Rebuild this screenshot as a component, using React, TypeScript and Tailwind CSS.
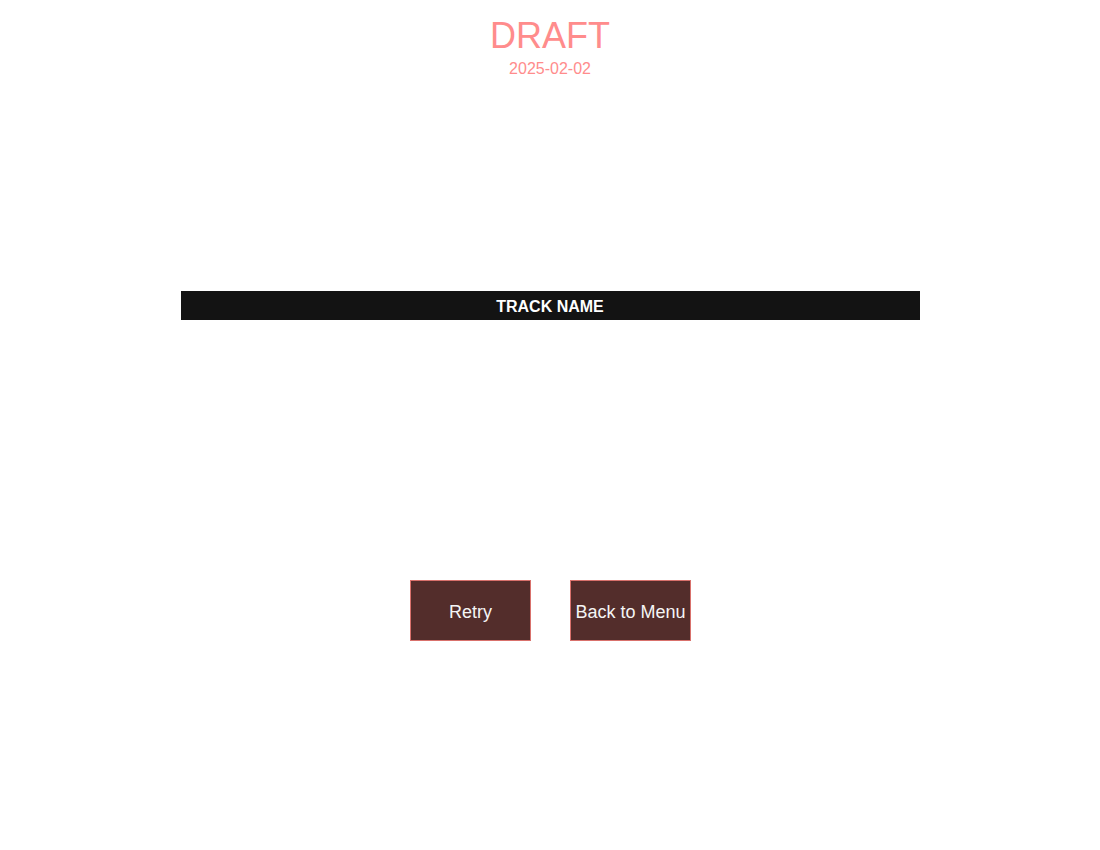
import React from 'react';

export default function App() {
  return (
    <div className="min-h-[850px] w-full bg-white flex flex-col items-center font-['Liberation_Sans',Arial,sans-serif]">
      {/* Header */}
      <div className="mt-[15px] flex flex-col items-center">
        <h1 className="text-[36px] leading-[41px] text-[#ff8c8c]">DRAFT</h1>
        <div className="mt-[4px] text-[16px] leading-[18px] text-[#ff8c8c]">2025-02-02</div>
      </div>

      {/* Track name bar */}
      <div className="mt-[213px] w-[739px] h-[29px] pt-[2px] bg-[#131313] flex items-center justify-center">
        <span className="text-white font-bold text-[16px]">TRACK NAME</span>
      </div>

      {/* Actions */}
      <div className="mt-[260px] ml-[1px] flex gap-[39px]">
        <button className="w-[121px] h-[61px] pt-[4px] bg-[#532d2b] border border-[#d9716c] text-[#f5f5f5] text-[18px]">
          Retry
        </button>
        <button className="w-[121px] h-[61px] pt-[4px] bg-[#532d2b] border border-[#d9716c] text-[#f5f5f5] text-[18px]">
          Back to Menu
        </button>
      </div>
    </div>
  );
}
